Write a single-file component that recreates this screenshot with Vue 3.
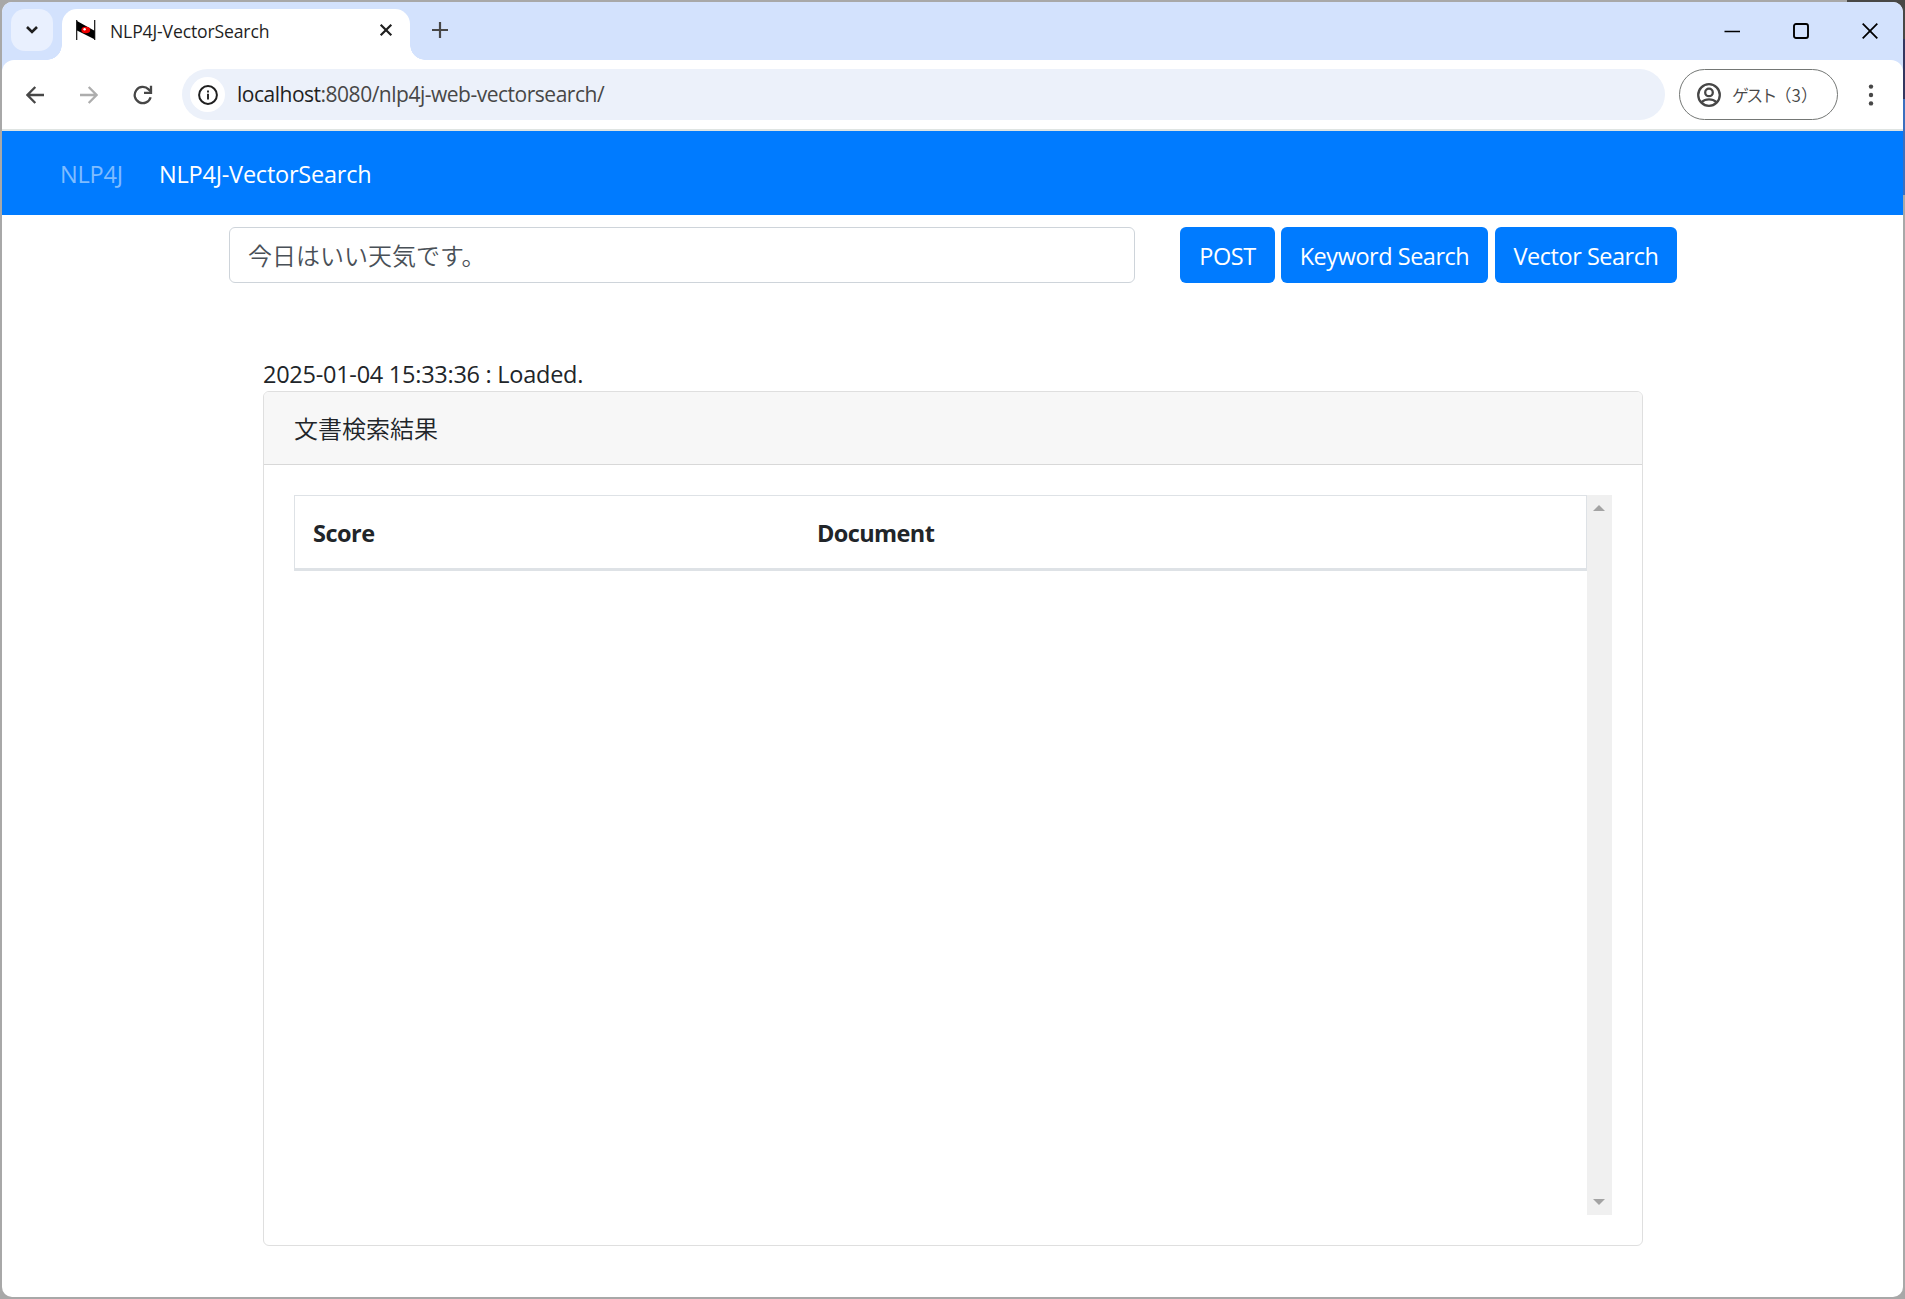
<!--
  App.vue：ブラウザウィンドウと NLP4J-VectorSearch の検索画面
-->

<template>
  <div class="desktop">
    <div class="window">
      <!-- タブバー -->
      <div class="tab-strip">
        <button class="tab-list" aria-label="tabs">
          <svg width="14" height="10" viewBox="0 0 14 10"><path d="M2 2l5 5 5-5" fill="none" stroke="#1f1f1f" stroke-width="2.6" /></svg>
        </button>
        <div class="tab">
          <svg class="favicon" width="20" height="21" viewBox="0 0 20 21">
            <path d="M1 1L19 11v8.5L1 10.5z" fill="#000" />
            <path d="M.7 0v20M18.7 0v20" stroke="#111" stroke-width="1.2" />
            <ellipse cx="9.8" cy="10" rx="4.4" ry="3.3" fill="#f00000" />
            <circle cx="8.6" cy="9.3" r="1.2" fill="#fff" />
          </svg>
          <span class="tab-title">NLP4J-VectorSearch</span>
          <svg class="tab-close" width="14" height="14" viewBox="0 0 14 14"><path d="M1.7 1.7l10.6 10.6M12.3 1.7L1.7 12.3" stroke="#1f1f1f" stroke-width="2.2" /></svg>
        </div>
        <svg class="new-tab" width="16" height="16" viewBox="0 0 16 16"><path d="M8 0v16M0 8h16" stroke="#474747" stroke-width="2.2" /></svg>
        <div class="window-controls">
          <svg width="16" height="16" viewBox="0 0 16 16"><path d="M.5 8.5h15.5" stroke="#000" stroke-width="1.7" /></svg>
          <svg width="16" height="16" viewBox="0 0 16 16"><rect x="1" y="1" width="14" height="14" rx="2" fill="none" stroke="#000" stroke-width="1.9" /></svg>
          <svg width="16" height="16" viewBox="0 0 16 16"><path d="M.7.7l14.6 14.6M15.3.7L.7 15.3" stroke="#000" stroke-width="1.8" /></svg>
        </div>
      </div>

      <!-- ツールバー -->
      <div class="toolbar">
        <svg class="back" width="18" height="18" viewBox="0 0 18 18"><path d="M18 9H1.6M9.3 1L1.4 9l7.9 8" fill="none" stroke="#474747" stroke-width="2.3" /></svg>
        <svg class="forward" width="18" height="18" viewBox="0 0 18 18"><path d="M0 9h16.4M8.7 1l7.9 8-7.9 8" fill="none" stroke="#adadad" stroke-width="2.3" /></svg>
        <svg class="reload" width="20" height="20" viewBox="0 0 20 20">
          <path d="M17.6 12.2A8.1 8.1 0 1 1 15.6 4.4L17.4 6.3" fill="none" stroke="#474747" stroke-width="2.3" />
          <path d="M18 .8v7h-7" fill="none" stroke="#474747" stroke-width="2.3" />
        </svg>
        <div class="omnibox">
          <span class="site-info">
            <svg width="20" height="20" viewBox="0 0 20 20">
              <circle cx="10" cy="10" r="8.9" fill="none" stroke="#1f1f1f" stroke-width="2" />
              <path d="M10 8.8v5.7M10 5.5v2" stroke="#1f1f1f" stroke-width="1.9" />
            </svg>
          </span>
          <span class="url"><b>localhost</b>:8080/nlp4j-web-vectorsearch/</span>
        </div>
        <div class="profile">
          <svg width="24" height="24" viewBox="0 0 24 24" fill="none" stroke="#474747" stroke-width="2.3">
            <circle cx="12" cy="12" r="10.8" />
            <circle cx="12" cy="9.4" r="3.8" />
            <path d="M4.6 19.2c4-3.7 10.8-3.7 14.8 0" />
          </svg>
          <span class="profile-name"><span class="kana">ゲスト</span>（3）</span>
        </div>
        <svg class="menu" width="6" height="22" viewBox="0 0 6 22" fill="#474747">
          <circle cx="3" cy="2.6" r="2.2" /><circle cx="3" cy="11" r="2.2" /><circle cx="3" cy="19.4" r="2.2" />
        </svg>
      </div>

      <!-- ナビゲーション -->
      <nav class="navbar">
        <a class="nav-brand">NLP4J</a>
        <a class="nav-active">NLP4J-VectorSearch</a>
      </nav>

      <!-- 検索フォーム -->
      <div class="search-row">
        <input v-model="text" class="search-input" type="text" />
        <button v-for="b in buttons" :key="b.key" class="btn" :class="b.key">{{ b.label }}</button>
      </div>

      <main class="content">
        <div class="status">{{ status }}</div>
        <div class="card">
          <div class="card-header">文書検索結果</div>
          <div class="card-body">
            <div class="result-area">
              <table>
                <thead>
                  <tr>
                    <th class="col-score">Score</th>
                    <th class="col-document">Document</th>
                  </tr>
                </thead>
              </table>
            </div>
            <div class="scrollbar">
              <svg width="12" height="6" viewBox="0 0 12 6"><path d="M6 0l6 6H0z" fill="#a3a3a3" /></svg>
              <svg width="12" height="6" viewBox="0 0 12 6"><path d="M0 0h12L6 6z" fill="#a3a3a3" /></svg>
            </div>
          </div>
        </div>
      </main>
    </div>
  </div>
</template>

<script setup>
import { ref } from 'vue'

const text = ref('今日はいい天気です。')
const status = ref('2025-01-04 15:33:36 : Loaded.')

// 検索フォームのボタン
const buttons = [
  { key: 'post', label: 'POST' },
  { key: 'keyword', label: 'Keyword Search' },
  { key: 'vector', label: 'Vector Search' }
]
</script>

<style>
body {
  margin: 0;
  background: #a8a8a8;
}
</style>

<style scoped>
* {
  box-sizing: border-box;
}

/* ウィンドウの背後に見えるデスクトップ */
.desktop {
  height: 1299px;
  padding: 2px;
  overflow: hidden;
  background:
    linear-gradient(#484846 39px, #34375f 39px, #34375f 99px, #3b6fbe 99px, #3b6fbe 195px, transparent 195px) right top / 12px 195px no-repeat,
    linear-gradient(#484846, #484846) right top / 58px 2px no-repeat,
    #a8a8a8;
  font-family: "Open Sans", "Noto Sans CJK JP", sans-serif;
  color: #212529;
}

.window {
  height: 1295px;
  border-radius: 10px;
  overflow: hidden;
  background: #fff;
}

svg {
  display: block;
  flex: none;
}

button {
  border: 0;
  padding: 0;
  font-family: inherit;
}

/* ---------- タブバー ---------- */
.tab-strip {
  display: flex;
  height: 58px;
  padding: 7px 0 0 9px;
  background: #d3e2fd;
}

.tab-list {
  display: flex;
  align-items: center;
  justify-content: center;
  width: 42px;
  height: 42px;
  border-radius: 14px;
  background: #e9f0fe;
}

.tab {
  position: relative;
  display: flex;
  width: 348px;
  margin-left: 9px;
  padding: 11px 17px 0 14px;
  border-radius: 15px 15px 0 0;
  background: #fff;
}

/* タブ下端の外向きの丸み */
.tab::before,
.tab::after {
  content: "";
  position: absolute;
  bottom: 0;
  width: 15px;
  height: 15px;
}

.tab::before {
  left: -15px;
  background: radial-gradient(circle at 0 0, transparent 14.5px, #fff 15px);
}

.tab::after {
  right: -15px;
  background: radial-gradient(circle at 100% 0, transparent 14.5px, #fff 15px);
}

.tab-title {
  flex: 1;
  margin: -2px 0 0 14px;
  font-size: 17.6px;
  line-height: 26px;
  letter-spacing: -0.15px;
  color: #1f1f1f;
}

.tab-close {
  margin-top: 3px;
}

.new-tab {
  margin: 13px 0 0 22px;
}

.window-controls {
  display: flex;
  gap: 53px;
  margin: 14px 25px 0 auto;
}

/* ---------- ツールバー ---------- */
.toolbar {
  display: flex;
  align-items: center;
  height: 71px;
  padding: 0 29px 0 24px;
  border-bottom: 2px solid #dfe4e2;
  border-radius: 12px 12px 0 0;
  background: #fff;
  box-shadow: 0 -12px 0 #d3e2fd;
}

.forward {
  margin-left: 36px;
}

.reload {
  margin-left: 35px;
}

.omnibox {
  display: flex;
  align-items: center;
  width: 1483px;
  height: 51px;
  margin-left: 29px;
  padding-left: 8px;
  border-radius: 26px;
  background: #ecf1fa;
}

.site-info {
  display: flex;
  align-items: center;
  justify-content: center;
  width: 35px;
  height: 35px;
  border-radius: 50%;
  background: #fff;
}

.url {
  margin-left: 12px;
  padding-bottom: 2px;
  font-size: 21px;
  letter-spacing: -0.49px;
  color: #474747;
  white-space: nowrap;
}

.url b {
  font-weight: 400;
  color: #1f1f1f;
}

.profile {
  display: flex;
  align-items: center;
  width: 159px;
  height: 51px;
  margin-left: 14px;
  padding-left: 17px;
  border: 1.5px solid #747775;
  border-radius: 26px;
}

.profile-name {
  margin-left: 11px;
  font-family: "Noto Sans CJK JP", sans-serif;
  font-size: 17px;
  font-weight: 350;
  color: #474747;
  white-space: nowrap;
}

/* カナだけ字間を詰める */
.kana {
  letter-spacing: -2.8px;
}

.menu {
  margin-left: auto;
}

/* ---------- ナビゲーション ---------- */
.navbar {
  display: flex;
  align-items: center;
  height: 84px;
  padding: 2px 0 0 58px;
  background: #007bff;
  font-size: 23.5px;
  letter-spacing: -0.22px;
}

.nav-brand {
  width: 99px;
  color: rgba(255, 255, 255, 0.5);
}

.nav-active {
  color: #fff;
}

/* ---------- 検索フォーム ---------- */
.search-row {
  display: flex;
  padding: 12px 0 0 227px;
}

.search-input {
  width: 906px;
  height: 56px;
  margin-right: 45px;
  padding: 0 18px 2px;
  border: 1px solid #ced4da;
  border-radius: 6px;
  font-family: "Noto Sans CJK JP", sans-serif;
  font-size: 24px;
  font-weight: 350;
  color: #495057;
}

.btn {
  height: 56px;
  padding-top: 2px;
  border-radius: 6px;
  background: #007bff;
  color: #fff;
  font-size: 23.5px;
  letter-spacing: -0.47px;
  white-space: nowrap;
}

.post {
  width: 95px;
}

.keyword {
  width: 207px;
  margin-left: 6px;
}

.vector {
  width: 182px;
  margin-left: 7px;
}

/* ---------- 検索結果 ---------- */
.content {
  padding: 73px 260px 0 261px;
}

.status {
  height: 35px;
  line-height: 36px;
  font-size: 23.5px;
  letter-spacing: -0.26px;
  white-space: nowrap;
}

.card {
  height: 855px;
  border: 1px solid #dfdfdf;
  border-radius: 6px;
  overflow: hidden;
}

.card-header {
  height: 73px;
  padding-left: 30px;
  border-bottom: 1px solid #d8d8d8;
  background: #f7f7f7;
  font-family: "Noto Sans CJK JP", sans-serif;
  font-size: 24px;
  font-weight: 350;
  line-height: 71px;
}

.card-body {
  display: flex;
  padding: 30px;
}

.result-area {
  width: 1293px;
}

table {
  width: 100%;
  border: 1px solid #dee2e6;
  border-bottom: 3px solid #dee2e6;
  border-spacing: 0;
}

th {
  height: 72px;
  padding: 1px 18px 0;
  text-align: left;
  font-size: 23.5px;
  font-weight: 700;
  letter-spacing: -0.5px;
}

.col-score {
  width: 504px;
}

.col-document {
  letter-spacing: -0.6px;
}

.scrollbar {
  display: flex;
  flex-direction: column;
  align-items: center;
  justify-content: space-between;
  width: 25px;
  height: 720px;
  padding: 10px 1px 10px 0;
  background: #f0f0f0;
}
</style>
